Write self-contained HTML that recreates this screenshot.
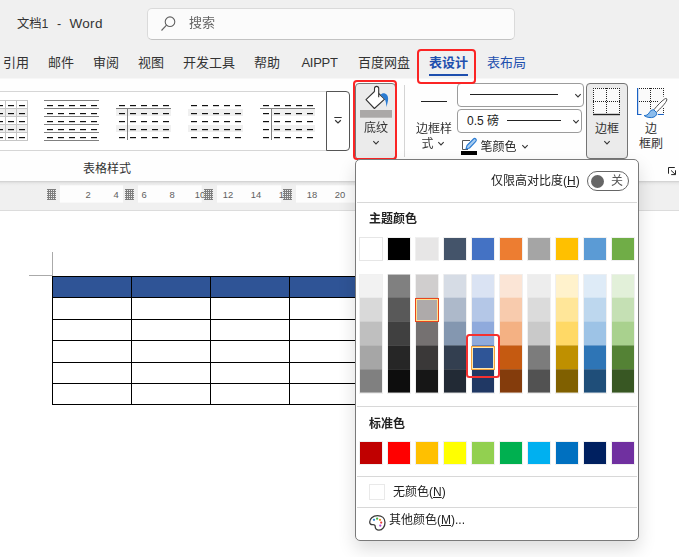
<!DOCTYPE html>
<html><head><meta charset="utf-8">
<style>
html,body{margin:0;padding:0}
body{width:679px;height:557px;overflow:hidden;position:relative;background:#f0f0f0;font-family:"Liberation Sans","Noto Sans CJK SC",sans-serif;color:#222;font-size:13px}
.abs{position:absolute}
.t{position:absolute;white-space:nowrap;line-height:16px}
.tab{position:absolute;top:55px;font-size:13px;line-height:16px;white-space:nowrap;color:#333}
.sw{position:absolute;width:22px;box-shadow:0 0 0 1px rgba(228,228,228,.55)}
.rn{position:absolute;top:189.300px;width:20px;text-align:center;font-size:9.400px;line-height:12px;color:#606060;font-family:"Liberation Sans",sans-serif}
.mk{position:absolute;top:189px;width:9px;height:11px;background:
 repeating-linear-gradient(180deg,#7e7e7e 0 1px,transparent 1px 2px),repeating-linear-gradient(90deg,transparent 0 1px,#7e7e7e 1px 2px);background-color:#ececec}
.sep{position:absolute;left:357px;width:280px;height:1px;background:#d8d8d8}
</style></head><body>

<!-- title bar -->
<div class="t" style="left:17px;top:16px;font-size:12.300px;color:#333">文档1</div><div class="t" style="left:57px;top:16px;font-size:12.500px;color:#333">-</div><div class="t" style="left:69.500px;top:16px;font-size:13.500px;letter-spacing:0.300px;color:#333">Word</div>
<div class="abs" style="left:147px;top:8px;width:366px;height:30px;border:1px solid #dadada;border-bottom-color:#c2c2c2;border-radius:5px;background:#fbfbfb;transform:translateZ(0)"></div>
<svg class="abs" style="left:159px;top:14px" width="20" height="20" viewBox="0 0 20 20"><circle cx="11" cy="7.700" r="4.800" fill="none" stroke="#606060" stroke-width="1.100"/><path d="M7.500 11.200 L2.500 16.500" stroke="#606060" stroke-width="1.100" fill="none"/></svg>
<div class="t" style="left:189px;top:15px;font-size:13px;color:#666">搜索</div>

<!-- tabs -->
<div class="tab" style="left:3px">引用</div>
<div class="tab" style="left:48px">邮件</div>
<div class="tab" style="left:93px">审阅</div>
<div class="tab" style="left:138px">视图</div>
<div class="tab" style="left:183px">开发工具</div>
<div class="tab" style="left:254px">帮助</div>
<div class="tab" style="left:301.500px;letter-spacing:-0.300px">AIPPT</div>
<div class="tab" style="left:358px">百度网盘</div>
<div class="tab" style="left:429px;color:#1e4fae;font-weight:bold">表设计</div>
<div class="abs" style="left:429px;top:74px;width:39px;height:2px;background:#1e4fae"></div>
<div class="tab" style="left:487px;color:#1e4fae">表布局</div>

<!-- ribbon -->
<div class="abs" style="left:0;top:78px;width:679px;height:103px;background:#fefefe;border-top:1px solid #f7f7f7;box-sizing:border-box"></div>
<div class="abs" style="left:-5px;top:91px;width:332px;height:58px;border:1px solid #d6d6d6;background:#fff"></div>
<div class="abs" style="left:326px;top:91px;width:22px;height:58px;border:1px solid #555;border-radius:0 4px 4px 0;background:#fff"></div>
<svg class="abs" style="left:332px;top:116px" width="12" height="10" viewBox="0 0 12 10"><path d="M2.300 1.500H9.700" stroke="#333" stroke-width="1"/><path d="M3.200 4.200L6 6.900L8.800 4.200" stroke="#333" stroke-width="1.200" fill="none"/></svg>

<!-- thumbs -->
<div class="abs" style="left:-28px;top:100px;width:56px;height:42px"><svg width="56" height="42" viewBox="0 0 56 42" shape-rendering="crispEdges" style="position:absolute;left:0;top:0"><rect x="0" y="9" width="56" height="7" fill="#f0f0f0"/><rect x="0" y="25" width="56" height="7" fill="#f0f0f0"/><rect x="0" y="0" width="56" height="1" fill="#c6c6c6"/><rect x="0" y="8" width="56" height="1" fill="#c6c6c6"/><rect x="0" y="16" width="56" height="1" fill="#c6c6c6"/><rect x="0" y="24" width="56" height="1" fill="#c6c6c6"/><rect x="0" y="32" width="56" height="1" fill="#c6c6c6"/><rect x="0" y="40" width="56" height="1" fill="#c6c6c6"/><rect x="0" y="0" width="1" height="41" fill="#c6c6c6"/><rect x="11" y="0" width="1" height="41" fill="#c6c6c6"/><rect x="22" y="0" width="1" height="41" fill="#c6c6c6"/><rect x="33" y="0" width="1" height="41" fill="#c6c6c6"/><rect x="44" y="0" width="1" height="41" fill="#c6c6c6"/><rect x="55" y="0" width="1" height="41" fill="#c6c6c6"/><rect x="3" y="5" width="6" height="1" fill="#111"/><rect x="3" y="6" width="6" height="1" fill="rgba(0,0,0,.18)"/><rect x="14" y="5" width="6" height="1" fill="#111"/><rect x="14" y="6" width="6" height="1" fill="rgba(0,0,0,.18)"/><rect x="25" y="5" width="6" height="1" fill="#111"/><rect x="25" y="6" width="6" height="1" fill="rgba(0,0,0,.18)"/><rect x="36" y="5" width="6" height="1" fill="#111"/><rect x="36" y="6" width="6" height="1" fill="rgba(0,0,0,.18)"/><rect x="47" y="5" width="6" height="1" fill="#111"/><rect x="47" y="6" width="6" height="1" fill="rgba(0,0,0,.18)"/><rect x="3" y="13" width="6" height="1" fill="#111"/><rect x="3" y="14" width="6" height="1" fill="rgba(0,0,0,.18)"/><rect x="14" y="13" width="6" height="1" fill="#111"/><rect x="14" y="14" width="6" height="1" fill="rgba(0,0,0,.18)"/><rect x="25" y="13" width="6" height="1" fill="#111"/><rect x="25" y="14" width="6" height="1" fill="rgba(0,0,0,.18)"/><rect x="36" y="13" width="6" height="1" fill="#111"/><rect x="36" y="14" width="6" height="1" fill="rgba(0,0,0,.18)"/><rect x="47" y="13" width="6" height="1" fill="#111"/><rect x="47" y="14" width="6" height="1" fill="rgba(0,0,0,.18)"/><rect x="3" y="21" width="6" height="1" fill="#111"/><rect x="3" y="22" width="6" height="1" fill="rgba(0,0,0,.18)"/><rect x="14" y="21" width="6" height="1" fill="#111"/><rect x="14" y="22" width="6" height="1" fill="rgba(0,0,0,.18)"/><rect x="25" y="21" width="6" height="1" fill="#111"/><rect x="25" y="22" width="6" height="1" fill="rgba(0,0,0,.18)"/><rect x="36" y="21" width="6" height="1" fill="#111"/><rect x="36" y="22" width="6" height="1" fill="rgba(0,0,0,.18)"/><rect x="47" y="21" width="6" height="1" fill="#111"/><rect x="47" y="22" width="6" height="1" fill="rgba(0,0,0,.18)"/><rect x="3" y="29" width="6" height="1" fill="#111"/><rect x="3" y="30" width="6" height="1" fill="rgba(0,0,0,.18)"/><rect x="14" y="29" width="6" height="1" fill="#111"/><rect x="14" y="30" width="6" height="1" fill="rgba(0,0,0,.18)"/><rect x="25" y="29" width="6" height="1" fill="#111"/><rect x="25" y="30" width="6" height="1" fill="rgba(0,0,0,.18)"/><rect x="36" y="29" width="6" height="1" fill="#111"/><rect x="36" y="30" width="6" height="1" fill="rgba(0,0,0,.18)"/><rect x="47" y="29" width="6" height="1" fill="#111"/><rect x="47" y="30" width="6" height="1" fill="rgba(0,0,0,.18)"/><rect x="3" y="37" width="6" height="1" fill="#111"/><rect x="3" y="38" width="6" height="1" fill="rgba(0,0,0,.18)"/><rect x="14" y="37" width="6" height="1" fill="#111"/><rect x="14" y="38" width="6" height="1" fill="rgba(0,0,0,.18)"/><rect x="25" y="37" width="6" height="1" fill="#111"/><rect x="25" y="38" width="6" height="1" fill="rgba(0,0,0,.18)"/><rect x="36" y="37" width="6" height="1" fill="#111"/><rect x="36" y="38" width="6" height="1" fill="rgba(0,0,0,.18)"/><rect x="47" y="37" width="6" height="1" fill="#111"/><rect x="47" y="38" width="6" height="1" fill="rgba(0,0,0,.18)"/></svg></div>
<div class="abs" style="left:44px;top:100px;width:56px;height:42px"><svg width="56" height="42" viewBox="0 0 56 42" shape-rendering="crispEdges" style="position:absolute;left:0;top:0"><rect x="0" y="0" width="55" height="1" fill="#808080"/><rect x="0" y="8" width="55" height="1" fill="#808080"/><rect x="0" y="16" width="55" height="1" fill="#808080"/><rect x="0" y="24" width="55" height="1" fill="#808080"/><rect x="0" y="32" width="55" height="1" fill="#808080"/><rect x="0" y="40" width="55" height="1" fill="#808080"/><rect x="3" y="5" width="6" height="1" fill="#111"/><rect x="3" y="6" width="6" height="1" fill="rgba(0,0,0,.18)"/><rect x="14" y="5" width="6" height="1" fill="#111"/><rect x="14" y="6" width="6" height="1" fill="rgba(0,0,0,.18)"/><rect x="25" y="5" width="6" height="1" fill="#111"/><rect x="25" y="6" width="6" height="1" fill="rgba(0,0,0,.18)"/><rect x="36" y="5" width="6" height="1" fill="#111"/><rect x="36" y="6" width="6" height="1" fill="rgba(0,0,0,.18)"/><rect x="47" y="5" width="6" height="1" fill="#111"/><rect x="47" y="6" width="6" height="1" fill="rgba(0,0,0,.18)"/><rect x="3" y="13" width="6" height="1" fill="#111"/><rect x="3" y="14" width="6" height="1" fill="rgba(0,0,0,.18)"/><rect x="14" y="13" width="6" height="1" fill="#111"/><rect x="14" y="14" width="6" height="1" fill="rgba(0,0,0,.18)"/><rect x="25" y="13" width="6" height="1" fill="#111"/><rect x="25" y="14" width="6" height="1" fill="rgba(0,0,0,.18)"/><rect x="36" y="13" width="6" height="1" fill="#111"/><rect x="36" y="14" width="6" height="1" fill="rgba(0,0,0,.18)"/><rect x="47" y="13" width="6" height="1" fill="#111"/><rect x="47" y="14" width="6" height="1" fill="rgba(0,0,0,.18)"/><rect x="3" y="21" width="6" height="1" fill="#111"/><rect x="3" y="22" width="6" height="1" fill="rgba(0,0,0,.18)"/><rect x="14" y="21" width="6" height="1" fill="#111"/><rect x="14" y="22" width="6" height="1" fill="rgba(0,0,0,.18)"/><rect x="25" y="21" width="6" height="1" fill="#111"/><rect x="25" y="22" width="6" height="1" fill="rgba(0,0,0,.18)"/><rect x="36" y="21" width="6" height="1" fill="#111"/><rect x="36" y="22" width="6" height="1" fill="rgba(0,0,0,.18)"/><rect x="47" y="21" width="6" height="1" fill="#111"/><rect x="47" y="22" width="6" height="1" fill="rgba(0,0,0,.18)"/><rect x="3" y="29" width="6" height="1" fill="#111"/><rect x="3" y="30" width="6" height="1" fill="rgba(0,0,0,.18)"/><rect x="14" y="29" width="6" height="1" fill="#111"/><rect x="14" y="30" width="6" height="1" fill="rgba(0,0,0,.18)"/><rect x="25" y="29" width="6" height="1" fill="#111"/><rect x="25" y="30" width="6" height="1" fill="rgba(0,0,0,.18)"/><rect x="36" y="29" width="6" height="1" fill="#111"/><rect x="36" y="30" width="6" height="1" fill="rgba(0,0,0,.18)"/><rect x="47" y="29" width="6" height="1" fill="#111"/><rect x="47" y="30" width="6" height="1" fill="rgba(0,0,0,.18)"/><rect x="3" y="37" width="6" height="1" fill="#111"/><rect x="3" y="38" width="6" height="1" fill="rgba(0,0,0,.18)"/><rect x="14" y="37" width="6" height="1" fill="#111"/><rect x="14" y="38" width="6" height="1" fill="rgba(0,0,0,.18)"/><rect x="25" y="37" width="6" height="1" fill="#111"/><rect x="25" y="38" width="6" height="1" fill="rgba(0,0,0,.18)"/><rect x="36" y="37" width="6" height="1" fill="#111"/><rect x="36" y="38" width="6" height="1" fill="rgba(0,0,0,.18)"/><rect x="47" y="37" width="6" height="1" fill="#111"/><rect x="47" y="38" width="6" height="1" fill="rgba(0,0,0,.18)"/></svg></div>
<div class="abs" style="left:116px;top:100px;width:56px;height:42px"><svg width="56" height="42" viewBox="0 0 56 42" shape-rendering="crispEdges" style="position:absolute;left:0;top:0"><rect x="0" y="9" width="55" height="7" fill="#f0f0f0"/><rect x="0" y="25" width="55" height="7" fill="#f0f0f0"/><rect x="0" y="8" width="55" height="1" fill="#808080"/><rect x="11" y="8" width="1" height="32" fill="#808080"/><rect x="3" y="5" width="6" height="1" fill="#111"/><rect x="3" y="6" width="6" height="1" fill="rgba(0,0,0,.18)"/><rect x="14" y="5" width="6" height="1" fill="#111"/><rect x="14" y="6" width="6" height="1" fill="rgba(0,0,0,.18)"/><rect x="25" y="5" width="6" height="1" fill="#111"/><rect x="25" y="6" width="6" height="1" fill="rgba(0,0,0,.18)"/><rect x="36" y="5" width="6" height="1" fill="#111"/><rect x="36" y="6" width="6" height="1" fill="rgba(0,0,0,.18)"/><rect x="47" y="5" width="6" height="1" fill="#111"/><rect x="47" y="6" width="6" height="1" fill="rgba(0,0,0,.18)"/><rect x="3" y="13" width="6" height="1" fill="#111"/><rect x="3" y="14" width="6" height="1" fill="rgba(0,0,0,.18)"/><rect x="14" y="13" width="6" height="1" fill="#111"/><rect x="14" y="14" width="6" height="1" fill="rgba(0,0,0,.18)"/><rect x="25" y="13" width="6" height="1" fill="#111"/><rect x="25" y="14" width="6" height="1" fill="rgba(0,0,0,.18)"/><rect x="36" y="13" width="6" height="1" fill="#111"/><rect x="36" y="14" width="6" height="1" fill="rgba(0,0,0,.18)"/><rect x="47" y="13" width="6" height="1" fill="#111"/><rect x="47" y="14" width="6" height="1" fill="rgba(0,0,0,.18)"/><rect x="3" y="21" width="6" height="1" fill="#111"/><rect x="3" y="22" width="6" height="1" fill="rgba(0,0,0,.18)"/><rect x="14" y="21" width="6" height="1" fill="#111"/><rect x="14" y="22" width="6" height="1" fill="rgba(0,0,0,.18)"/><rect x="25" y="21" width="6" height="1" fill="#111"/><rect x="25" y="22" width="6" height="1" fill="rgba(0,0,0,.18)"/><rect x="36" y="21" width="6" height="1" fill="#111"/><rect x="36" y="22" width="6" height="1" fill="rgba(0,0,0,.18)"/><rect x="47" y="21" width="6" height="1" fill="#111"/><rect x="47" y="22" width="6" height="1" fill="rgba(0,0,0,.18)"/><rect x="3" y="29" width="6" height="1" fill="#111"/><rect x="3" y="30" width="6" height="1" fill="rgba(0,0,0,.18)"/><rect x="14" y="29" width="6" height="1" fill="#111"/><rect x="14" y="30" width="6" height="1" fill="rgba(0,0,0,.18)"/><rect x="25" y="29" width="6" height="1" fill="#111"/><rect x="25" y="30" width="6" height="1" fill="rgba(0,0,0,.18)"/><rect x="36" y="29" width="6" height="1" fill="#111"/><rect x="36" y="30" width="6" height="1" fill="rgba(0,0,0,.18)"/><rect x="47" y="29" width="6" height="1" fill="#111"/><rect x="47" y="30" width="6" height="1" fill="rgba(0,0,0,.18)"/><rect x="3" y="37" width="6" height="1" fill="#111"/><rect x="3" y="38" width="6" height="1" fill="rgba(0,0,0,.18)"/><rect x="14" y="37" width="6" height="1" fill="#111"/><rect x="14" y="38" width="6" height="1" fill="rgba(0,0,0,.18)"/><rect x="25" y="37" width="6" height="1" fill="#111"/><rect x="25" y="38" width="6" height="1" fill="rgba(0,0,0,.18)"/><rect x="36" y="37" width="6" height="1" fill="#111"/><rect x="36" y="38" width="6" height="1" fill="rgba(0,0,0,.18)"/><rect x="47" y="37" width="6" height="1" fill="#111"/><rect x="47" y="38" width="6" height="1" fill="rgba(0,0,0,.18)"/></svg></div>
<div class="abs" style="left:188px;top:100px;width:56px;height:42px"><svg width="56" height="42" viewBox="0 0 56 42" shape-rendering="crispEdges" style="position:absolute;left:0;top:0"><rect x="0" y="9" width="55" height="7" fill="#f0f0f0"/><rect x="0" y="25" width="55" height="7" fill="#f0f0f0"/><rect x="3" y="5" width="6" height="1" fill="#111"/><rect x="3" y="6" width="6" height="1" fill="rgba(0,0,0,.18)"/><rect x="14" y="5" width="6" height="1" fill="#111"/><rect x="14" y="6" width="6" height="1" fill="rgba(0,0,0,.18)"/><rect x="25" y="5" width="6" height="1" fill="#111"/><rect x="25" y="6" width="6" height="1" fill="rgba(0,0,0,.18)"/><rect x="36" y="5" width="6" height="1" fill="#111"/><rect x="36" y="6" width="6" height="1" fill="rgba(0,0,0,.18)"/><rect x="47" y="5" width="6" height="1" fill="#111"/><rect x="47" y="6" width="6" height="1" fill="rgba(0,0,0,.18)"/><rect x="3" y="13" width="6" height="1" fill="#111"/><rect x="3" y="14" width="6" height="1" fill="rgba(0,0,0,.18)"/><rect x="14" y="13" width="6" height="1" fill="#111"/><rect x="14" y="14" width="6" height="1" fill="rgba(0,0,0,.18)"/><rect x="25" y="13" width="6" height="1" fill="#111"/><rect x="25" y="14" width="6" height="1" fill="rgba(0,0,0,.18)"/><rect x="36" y="13" width="6" height="1" fill="#111"/><rect x="36" y="14" width="6" height="1" fill="rgba(0,0,0,.18)"/><rect x="47" y="13" width="6" height="1" fill="#111"/><rect x="47" y="14" width="6" height="1" fill="rgba(0,0,0,.18)"/><rect x="3" y="21" width="6" height="1" fill="#111"/><rect x="3" y="22" width="6" height="1" fill="rgba(0,0,0,.18)"/><rect x="14" y="21" width="6" height="1" fill="#111"/><rect x="14" y="22" width="6" height="1" fill="rgba(0,0,0,.18)"/><rect x="25" y="21" width="6" height="1" fill="#111"/><rect x="25" y="22" width="6" height="1" fill="rgba(0,0,0,.18)"/><rect x="36" y="21" width="6" height="1" fill="#111"/><rect x="36" y="22" width="6" height="1" fill="rgba(0,0,0,.18)"/><rect x="47" y="21" width="6" height="1" fill="#111"/><rect x="47" y="22" width="6" height="1" fill="rgba(0,0,0,.18)"/><rect x="3" y="29" width="6" height="1" fill="#111"/><rect x="3" y="30" width="6" height="1" fill="rgba(0,0,0,.18)"/><rect x="14" y="29" width="6" height="1" fill="#111"/><rect x="14" y="30" width="6" height="1" fill="rgba(0,0,0,.18)"/><rect x="25" y="29" width="6" height="1" fill="#111"/><rect x="25" y="30" width="6" height="1" fill="rgba(0,0,0,.18)"/><rect x="36" y="29" width="6" height="1" fill="#111"/><rect x="36" y="30" width="6" height="1" fill="rgba(0,0,0,.18)"/><rect x="47" y="29" width="6" height="1" fill="#111"/><rect x="47" y="30" width="6" height="1" fill="rgba(0,0,0,.18)"/><rect x="3" y="37" width="6" height="1" fill="#111"/><rect x="3" y="38" width="6" height="1" fill="rgba(0,0,0,.18)"/><rect x="14" y="37" width="6" height="1" fill="#111"/><rect x="14" y="38" width="6" height="1" fill="rgba(0,0,0,.18)"/><rect x="25" y="37" width="6" height="1" fill="#111"/><rect x="25" y="38" width="6" height="1" fill="rgba(0,0,0,.18)"/><rect x="36" y="37" width="6" height="1" fill="#111"/><rect x="36" y="38" width="6" height="1" fill="rgba(0,0,0,.18)"/><rect x="47" y="37" width="6" height="1" fill="#111"/><rect x="47" y="38" width="6" height="1" fill="rgba(0,0,0,.18)"/></svg></div>
<div class="abs" style="left:260px;top:100px;width:56px;height:42px"><svg width="56" height="42" viewBox="0 0 56 42" shape-rendering="crispEdges" style="position:absolute;left:0;top:0"><rect x="12" y="9" width="43" height="7" fill="#f0f0f0"/><rect x="12" y="25" width="43" height="7" fill="#f0f0f0"/><rect x="0" y="8" width="55" height="1" fill="#808080"/><rect x="11" y="8" width="1" height="32" fill="#808080"/><rect x="3" y="5" width="6" height="1" fill="#111"/><rect x="3" y="6" width="6" height="1" fill="rgba(0,0,0,.18)"/><rect x="14" y="5" width="6" height="1" fill="#111"/><rect x="14" y="6" width="6" height="1" fill="rgba(0,0,0,.18)"/><rect x="25" y="5" width="6" height="1" fill="#111"/><rect x="25" y="6" width="6" height="1" fill="rgba(0,0,0,.18)"/><rect x="36" y="5" width="6" height="1" fill="#111"/><rect x="36" y="6" width="6" height="1" fill="rgba(0,0,0,.18)"/><rect x="47" y="5" width="6" height="1" fill="#111"/><rect x="47" y="6" width="6" height="1" fill="rgba(0,0,0,.18)"/><rect x="3" y="13" width="6" height="1" fill="#111"/><rect x="3" y="14" width="6" height="1" fill="rgba(0,0,0,.18)"/><rect x="14" y="13" width="6" height="1" fill="#111"/><rect x="14" y="14" width="6" height="1" fill="rgba(0,0,0,.18)"/><rect x="25" y="13" width="6" height="1" fill="#111"/><rect x="25" y="14" width="6" height="1" fill="rgba(0,0,0,.18)"/><rect x="36" y="13" width="6" height="1" fill="#111"/><rect x="36" y="14" width="6" height="1" fill="rgba(0,0,0,.18)"/><rect x="47" y="13" width="6" height="1" fill="#111"/><rect x="47" y="14" width="6" height="1" fill="rgba(0,0,0,.18)"/><rect x="3" y="21" width="6" height="1" fill="#111"/><rect x="3" y="22" width="6" height="1" fill="rgba(0,0,0,.18)"/><rect x="14" y="21" width="6" height="1" fill="#111"/><rect x="14" y="22" width="6" height="1" fill="rgba(0,0,0,.18)"/><rect x="25" y="21" width="6" height="1" fill="#111"/><rect x="25" y="22" width="6" height="1" fill="rgba(0,0,0,.18)"/><rect x="36" y="21" width="6" height="1" fill="#111"/><rect x="36" y="22" width="6" height="1" fill="rgba(0,0,0,.18)"/><rect x="47" y="21" width="6" height="1" fill="#111"/><rect x="47" y="22" width="6" height="1" fill="rgba(0,0,0,.18)"/><rect x="3" y="29" width="6" height="1" fill="#111"/><rect x="3" y="30" width="6" height="1" fill="rgba(0,0,0,.18)"/><rect x="14" y="29" width="6" height="1" fill="#111"/><rect x="14" y="30" width="6" height="1" fill="rgba(0,0,0,.18)"/><rect x="25" y="29" width="6" height="1" fill="#111"/><rect x="25" y="30" width="6" height="1" fill="rgba(0,0,0,.18)"/><rect x="36" y="29" width="6" height="1" fill="#111"/><rect x="36" y="30" width="6" height="1" fill="rgba(0,0,0,.18)"/><rect x="47" y="29" width="6" height="1" fill="#111"/><rect x="47" y="30" width="6" height="1" fill="rgba(0,0,0,.18)"/><rect x="3" y="37" width="6" height="1" fill="#111"/><rect x="3" y="38" width="6" height="1" fill="rgba(0,0,0,.18)"/><rect x="14" y="37" width="6" height="1" fill="#111"/><rect x="14" y="38" width="6" height="1" fill="rgba(0,0,0,.18)"/><rect x="25" y="37" width="6" height="1" fill="#111"/><rect x="25" y="38" width="6" height="1" fill="rgba(0,0,0,.18)"/><rect x="36" y="37" width="6" height="1" fill="#111"/><rect x="36" y="38" width="6" height="1" fill="rgba(0,0,0,.18)"/><rect x="47" y="37" width="6" height="1" fill="#111"/><rect x="47" y="38" width="6" height="1" fill="rgba(0,0,0,.18)"/></svg></div>

<div class="t" style="left:83px;top:161px;font-size:12px;color:#333">表格样式</div>

<!-- shading button -->
<div class="abs" style="left:355px;top:83px;width:41px;height:77px;border:1px solid #777;border-radius:4px;background:#ebebeb;box-sizing:border-box"></div>
<div class="abs" style="left:353px;top:80px;width:44px;height:80px;border:2px solid #fb2424;border-radius:4px;box-sizing:border-box"></div>
<svg class="abs" style="left:355px;top:83px" width="40" height="40" viewBox="0 0 40 40">
<rect x="5" y="27" width="32" height="7.700" fill="#aaa8a7"/>
<path d="M20.500 7.500 L11 16.600 L19.400 25.500 L29.600 16.100 Z" fill="#fff" stroke="#333" stroke-width="1.100" stroke-linejoin="round"/>
<path d="M19.500 8.700 V5.500 a2.100 2.100 0 0 1 4.200 0 V14.300" fill="#fff" stroke="#333" stroke-width="1.100"/>
<path d="M25.500 11.800 C26.500 10.300 28.500 9.800 30 10.400 C32.500 11.400 33.600 14 33 17.500 C32.600 20 31.800 22.500 31.400 24.200 C31.200 21 31 18.500 29.600 16.100 Z" fill="#2b7cd3"/>
</svg>
<div class="t" style="left:364px;top:120px;font-size:12px;color:#333">底纹</div>
<svg class="abs" style="left:371px;top:139px" width="10" height="7" viewBox="0 0 10 7"><path d="M2.300 2.200L5 4.900L7.700 2.200" stroke="#333" stroke-width="1.050" fill="none"/></svg>

<div class="abs" style="left:404px;top:85px;width:1px;height:72px;background:#d4d4d4"></div>

<!-- border style -->
<div class="abs" style="left:421px;top:101px;width:26px;height:1px;background:#222"></div>
<div class="t" style="left:416px;top:121px;font-size:12px;color:#333">边框样</div>
<div class="t" style="left:421.500px;top:136px;font-size:12px;color:#333">式</div>
<svg class="abs" style="left:436px;top:140px" width="10" height="7" viewBox="0 0 10 7"><path d="M2.300 2.200L5 4.900L7.700 2.200" stroke="#333" stroke-width="1.050" fill="none"/></svg>

<div class="abs" style="left:457px;top:83px;width:127px;height:24px;border:1px solid #9c9c9c;border-radius:4px;background:#fff;box-sizing:border-box"></div>
<div class="abs" style="left:470px;top:94px;width:88px;height:1px;background:#222"></div>
<svg class="abs" style="left:572.500px;top:92px" width="10" height="7" viewBox="0 0 10 7"><path d="M2.300 2.200L5 4.900L7.700 2.200" stroke="#333" stroke-width="1.050" fill="none"/></svg>
<div class="abs" style="left:457px;top:109px;width:125px;height:24px;border:1px solid #9c9c9c;border-radius:4px;background:#fff;box-sizing:border-box"></div>
<div class="t" style="left:467px;top:113px;font-size:12px;color:#222">0.5 磅</div>
<div class="abs" style="left:507px;top:120px;width:54px;height:1px;background:#222"></div>
<svg class="abs" style="left:570.500px;top:118px" width="10" height="7" viewBox="0 0 10 7"><path d="M2.300 2.200L5 4.900L7.700 2.200" stroke="#333" stroke-width="1.050" fill="none"/></svg>

<!-- pen color -->
<svg class="abs" style="left:460px;top:137px" width="18" height="19" viewBox="0 0 18 19">
<rect x="1" y="14" width="16" height="4" fill="#000"/>
<path d="M2.5 12.5 H8 M2.5 12.5 V3.5 H10" fill="none" stroke="#555" stroke-width="1"/>
<path d="M6 12 L7 8.5 L13.5 2 a1.5 1.5 0 0 1 2.3 2.3 L9.5 11 Z" fill="#a9cdf0" stroke="#2b7cd3" stroke-width="1.1" stroke-linejoin="round"/>
</svg>
<div class="t" style="left:480.500px;top:138.500px;font-size:12px;color:#222">笔颜色</div>
<svg class="abs" style="left:519.500px;top:143px" width="10" height="7" viewBox="0 0 10 7"><path d="M2.300 2.200L5 4.900L7.700 2.200" stroke="#333" stroke-width="1.050" fill="none"/></svg>

<!-- border button -->
<div class="abs" style="left:586px;top:83px;width:42px;height:76px;border:1px solid #747474;border-radius:4px;background:#ebebeb;box-sizing:border-box"></div>
<svg class="abs" style="left:592px;top:87px" width="30" height="30" viewBox="0 0 30 30">
<rect x="1" y="1" width="27" height="27" fill="#fafafa"/><g stroke="#222" stroke-width="1" stroke-dasharray="1 1" fill="none"><path d="M1.5 1V27M14.5 1V27M27.5 1V27M1 1.5H28M1 14.5H28"/></g>
<path d="M1 27.5H28" stroke="#222" stroke-width="1.4"/>
</svg>
<div class="t" style="left:595px;top:121px;font-size:12px;color:#333">边框</div>
<svg class="abs" style="left:602px;top:139px" width="10" height="7" viewBox="0 0 10 7"><path d="M2.300 2.200L5 4.900L7.700 2.200" stroke="#333" stroke-width="1.050" fill="none"/></svg>

<!-- border painter -->
<svg class="abs" style="left:636px;top:87px" width="36" height="34" viewBox="0 0 36 34">
<rect x="2" y="2" width="25.500" height="25" fill="#fafafa"/>
<g stroke="#222" stroke-width="1" stroke-dasharray="1 1" fill="none"><path d="M14.500 1V22M27.500 1V9.500M27.500 21V26M3 1.500H28M3 14.500H22"/></g>
<path d="M1.600 1.100V27.500H5.500 M21.800 27.500H27.900" stroke="#1a62c4" stroke-width="1.200" fill="none"/>
<path d="M17.800 22.800 C21 19 25.500 14 28.600 12 C30 11 31.200 11.300 30.800 13 C30 16 24.500 21.500 20.300 25.300 Z" fill="#fff" stroke="#505050" stroke-width="1"/>
<path d="M17.800 22.800 C15.500 22.600 14 24 13.200 25.800 C12 28 10 28.500 8.100 28.500 C10.500 30.500 15 31.300 18 30 C20.500 28.800 21 27 20.300 25.300 Z" fill="#8bbcec" stroke="#1e6fc7" stroke-width="1"/>
</svg>
<div class="t" style="left:645px;top:121px;font-size:12px;color:#333">边</div>
<div class="t" style="left:639px;top:135.500px;font-size:12px;color:#333">框刷</div>

<svg class="abs" style="left:667px;top:166px" width="10" height="10" viewBox="0 0 10 10"><g stroke="#222" stroke-width="1" fill="none"><path d="M1.500 7.700V1.500H7.800"/><path d="M4 4.400L8.300 8.400"/><path d="M8.500 4.300V8.600H4.200"/></g></svg>

<!-- red box tab -->
<div class="abs" style="left:417px;top:49px;width:59px;height:35px;border:2px solid #fb2424;border-radius:4px;box-sizing:border-box"></div>

<!-- ruler -->
<div class="abs" style="left:0;top:182px;width:679px;height:29px;background:#f0f0f0;border-bottom:1px solid #dcdcdc;box-sizing:border-box"></div>
<div class="abs" style="left:0;top:181px;width:679px;height:5px;background:linear-gradient(to bottom,rgba(0,0,0,.15),rgba(0,0,0,.07) 25%,rgba(0,0,0,.025) 55%,transparent)"></div>
<svg class="abs" style="left:0;top:182px" width="360" height="28" viewBox="0 182 360 28"><g fill="#fdfdfd"><rect x="59.900" y="185.300" width="63.100" height="17.300"/><rect x="138" y="185.300" width="63.700" height="17.300"/><rect x="217" y="185.300" width="64.200" height="17.300"/><rect x="296" y="185.300" width="60" height="17.300"/></g></svg>
<span class="rn" style="left:78px">2</span>
<span class="rn" style="left:106px">4</span>
<span class="rn" style="left:134px">6</span>
<span class="rn" style="left:162px">8</span>
<span class="rn" style="left:190px">10</span>
<span class="rn" style="left:218px">12</span>
<span class="rn" style="left:246px">14</span>
<span class="rn" style="left:274px">16</span>
<span class="rn" style="left:302px">18</span>
<span class="rn" style="left:330px">20</span>
<div class="mk" style="left:47px"></div>
<div class="mk" style="left:125px"></div>
<div class="mk" style="left:204px"></div>
<div class="mk" style="left:283px"></div>

<!-- doc -->
<div class="abs" style="left:0;top:211px;width:679px;height:346px;background:#fff"></div>
<div class="abs" style="left:52px;top:252px;width:1px;height:24px;background:#aaa"></div>
<div class="abs" style="left:29px;top:275px;width:24px;height:1px;background:#aaa"></div>
<div class="abs" style="left:52px;top:276px;width:320px;height:22px;background:#2f5496"></div>
<svg class="abs" style="left:52px;top:276px" width="320" height="130" viewBox="0 0 320 130"><g stroke="#000" stroke-width="1" fill="none">
<path d="M0 0.5H320M0 21.5H320M0 43.5H320M0 64.5H320M0 86.5H320M0 107.5H320M0 128.5H320"/>
<path d="M0.5 0V129M79.5 0V129M158.5 0V129M237.5 0V129M316.5 0V129"/></g></svg>

<!-- dropdown panel -->
<div class="abs" style="left:355px;top:159px;width:284px;height:382px;border:1px solid #7a7a7a;border-radius:5px;background:#fff;box-sizing:border-box;box-shadow:0 8px 18px rgba(0,0,0,.14)"></div>
<div class="t" style="left:491px;top:173px;font-size:12px;color:#222">仅限高对比度(<u>H</u>)</div>
<div class="abs" style="left:587px;top:171px;width:42px;height:20px;border:1px solid #666;border-radius:10px;box-sizing:border-box;background:#fff"></div>
<div class="abs" style="left:591px;top:174.500px;width:13px;height:13px;border-radius:7px;background:#666"></div>
<div class="t" style="left:611px;top:173px;font-size:12px;color:#555">关</div>
<div class="sep" style="top:202px"></div>
<div class="t" style="left:369px;top:211px;font-size:12px;font-weight:bold;color:#222">主题颜色</div>
<div class="sw" style="left:360px;top:238px;height:22px;background:#FFFFFF;box-shadow:0 0 0 1px #e6e6e6;"></div>
<div class="sw" style="left:388px;top:238px;height:22px;background:#000000;"></div>
<div class="sw" style="left:416px;top:238px;height:22px;background:#E7E6E6;"></div>
<div class="sw" style="left:444px;top:238px;height:22px;background:#44546A;"></div>
<div class="sw" style="left:472px;top:238px;height:22px;background:#4472C4;"></div>
<div class="sw" style="left:500px;top:238px;height:22px;background:#ED7D31;"></div>
<div class="sw" style="left:528px;top:238px;height:22px;background:#A5A5A5;"></div>
<div class="sw" style="left:556px;top:238px;height:22px;background:#FFC000;"></div>
<div class="sw" style="left:584px;top:238px;height:22px;background:#5B9BD5;"></div>
<div class="sw" style="left:612px;top:238px;height:22px;background:#70AD47;"></div>
<div class="sw" style="left:360px;top:275px;height:118px"></div>
<div class="sw" style="left:388px;top:275px;height:118px"></div>
<div class="sw" style="left:416px;top:275px;height:118px"></div>
<div class="sw" style="left:444px;top:275px;height:118px"></div>
<div class="sw" style="left:472px;top:275px;height:118px"></div>
<div class="sw" style="left:500px;top:275px;height:118px"></div>
<div class="sw" style="left:528px;top:275px;height:118px"></div>
<div class="sw" style="left:556px;top:275px;height:118px"></div>
<div class="sw" style="left:584px;top:275px;height:118px"></div>
<div class="sw" style="left:612px;top:275px;height:118px"></div>
<svg class="abs" style="left:355px;top:270px" width="284" height="128" viewBox="355 270 284 128"><rect x="360" y="274.6" width="22" height="23.4" fill="#F2F2F2"/><rect x="360" y="297.7" width="22" height="24.1" fill="#D9D9D9"/><rect x="360" y="321.5" width="22" height="24.2" fill="#BFBFBF"/><rect x="360" y="345.4" width="22" height="24.2" fill="#A6A6A6"/><rect x="360" y="369.3" width="22" height="23.3" fill="#808080"/><rect x="388" y="274.6" width="22" height="23.4" fill="#808080"/><rect x="388" y="297.7" width="22" height="24.1" fill="#595959"/><rect x="388" y="321.5" width="22" height="24.2" fill="#404040"/><rect x="388" y="345.4" width="22" height="24.2" fill="#262626"/><rect x="388" y="369.3" width="22" height="23.3" fill="#0D0D0D"/><rect x="416" y="274.6" width="22" height="23.4" fill="#D0CECE"/><rect x="416" y="297.7" width="22" height="24.1" fill="#AEAAAA"/><rect x="416" y="321.5" width="22" height="24.2" fill="#757171"/><rect x="416" y="345.4" width="22" height="24.2" fill="#3A3838"/><rect x="416" y="369.3" width="22" height="23.3" fill="#161616"/><rect x="444" y="274.6" width="22" height="23.4" fill="#D6DCE5"/><rect x="444" y="297.7" width="22" height="24.1" fill="#ADB9CA"/><rect x="444" y="321.5" width="22" height="24.2" fill="#8497B0"/><rect x="444" y="345.4" width="22" height="24.2" fill="#333F50"/><rect x="444" y="369.3" width="22" height="23.3" fill="#222A35"/><rect x="472" y="274.6" width="22" height="23.4" fill="#DAE3F3"/><rect x="472" y="297.7" width="22" height="24.1" fill="#B4C7E7"/><rect x="472" y="321.5" width="22" height="24.2" fill="#8FAADC"/><rect x="472" y="345.4" width="22" height="24.2" fill="#2F5597"/><rect x="472" y="369.3" width="22" height="23.3" fill="#203864"/><rect x="500" y="274.6" width="22" height="23.4" fill="#FBE5D6"/><rect x="500" y="297.7" width="22" height="24.1" fill="#F8CBAD"/><rect x="500" y="321.5" width="22" height="24.2" fill="#F4B183"/><rect x="500" y="345.4" width="22" height="24.2" fill="#C55A11"/><rect x="500" y="369.3" width="22" height="23.3" fill="#843C0C"/><rect x="528" y="274.6" width="22" height="23.4" fill="#EDEDED"/><rect x="528" y="297.7" width="22" height="24.1" fill="#DBDBDB"/><rect x="528" y="321.5" width="22" height="24.2" fill="#C9C9C9"/><rect x="528" y="345.4" width="22" height="24.2" fill="#7C7C7C"/><rect x="528" y="369.3" width="22" height="23.3" fill="#525252"/><rect x="556" y="274.6" width="22" height="23.4" fill="#FFF2CC"/><rect x="556" y="297.7" width="22" height="24.1" fill="#FFE699"/><rect x="556" y="321.5" width="22" height="24.2" fill="#FFD966"/><rect x="556" y="345.4" width="22" height="24.2" fill="#BF9000"/><rect x="556" y="369.3" width="22" height="23.3" fill="#806000"/><rect x="584" y="274.6" width="22" height="23.4" fill="#DEEBF7"/><rect x="584" y="297.7" width="22" height="24.1" fill="#BDD7EE"/><rect x="584" y="321.5" width="22" height="24.2" fill="#9DC3E6"/><rect x="584" y="345.4" width="22" height="24.2" fill="#2E75B6"/><rect x="584" y="369.3" width="22" height="23.3" fill="#1F4E79"/><rect x="612" y="274.6" width="22" height="23.4" fill="#E2F0D9"/><rect x="612" y="297.7" width="22" height="24.1" fill="#C5E0B4"/><rect x="612" y="321.5" width="22" height="24.2" fill="#A9D18E"/><rect x="612" y="345.4" width="22" height="24.2" fill="#548235"/><rect x="612" y="369.3" width="22" height="23.3" fill="#385723"/></svg>
<div class="sw" style="left:360px;top:442px;height:22px;background:#C00000"></div>
<div class="sw" style="left:388px;top:442px;height:22px;background:#FF0000"></div>
<div class="sw" style="left:416px;top:442px;height:22px;background:#FFC000"></div>
<div class="sw" style="left:444px;top:442px;height:22px;background:#FFFF00"></div>
<div class="sw" style="left:472px;top:442px;height:22px;background:#92D050"></div>
<div class="sw" style="left:500px;top:442px;height:22px;background:#00B050"></div>
<div class="sw" style="left:528px;top:442px;height:22px;background:#00B0F0"></div>
<div class="sw" style="left:556px;top:442px;height:22px;background:#0070C0"></div>
<div class="sw" style="left:584px;top:442px;height:22px;background:#002060"></div>
<div class="sw" style="left:612px;top:442px;height:22px;background:#7030A0"></div>
<!-- selection highlights -->
<div class="abs" style="left:415px;top:297.700px;width:24px;height:24.200px;border:1px solid #e8461c;box-sizing:border-box;box-shadow:inset 0 0 0 1px #ffe08c;background:#aeaaaa"></div>
<div class="abs" style="left:471.200px;top:345.700px;width:24px;height:24.100px;border:1px solid #f4a23c;box-sizing:border-box;box-shadow:inset 0 0 0 1px #ffe9b0;background:#2f5597"></div>
<div class="abs" style="left:466.400px;top:334px;width:33.700px;height:43.500px;border:2px solid #f53030;border-radius:3.500px;box-sizing:border-box"></div>

<div class="sep" style="top:406px"></div>
<div class="t" style="left:369px;top:416px;font-size:12px;font-weight:bold;color:#222">标准色</div>
<div class="sep" style="top:476px"></div>
<div class="abs" style="left:369px;top:484px;width:16px;height:16px;border:1px solid #e9e9e9;box-sizing:border-box;background:#fff"></div>
<div class="t" style="left:393px;top:484px;font-size:12px;color:#222">无颜色(<u>N</u>)</div>
<div class="sep" style="top:507px"></div>
<svg class="abs" style="left:368.600px;top:515.200px" width="18" height="18" viewBox="0 0 18 18">
<path d="M8.500 0.700 C3.500 0.700 0.700 4 0.700 7 C0.700 9 2 9.800 3.600 9.600 C5.200 9.400 6.200 10 6.200 11.500 C6.200 13.500 7.500 15.200 10 15.200 C13.500 15.200 16 11.500 16 7.500 C16 3.500 13 0.700 8.500 0.700 Z" fill="#fff" stroke="#3a3a3a" stroke-width="1.300"/>
<circle cx="5" cy="4.800" r="1.150" fill="#2b88d8"/><circle cx="8.100" cy="3.700" r="1.150" fill="#3cb043"/><circle cx="11" cy="4.800" r="1.150" fill="#f28c1c"/><circle cx="12.200" cy="7.600" r="1.150" fill="#e83b3b"/><circle cx="11.300" cy="10.600" r="1.150" fill="#b03fd0"/>
</svg>
<div class="t" style="left:389px;top:511.500px;font-size:12px;color:#222">其他颜色(<u>M</u>)...</div>

</body></html>
